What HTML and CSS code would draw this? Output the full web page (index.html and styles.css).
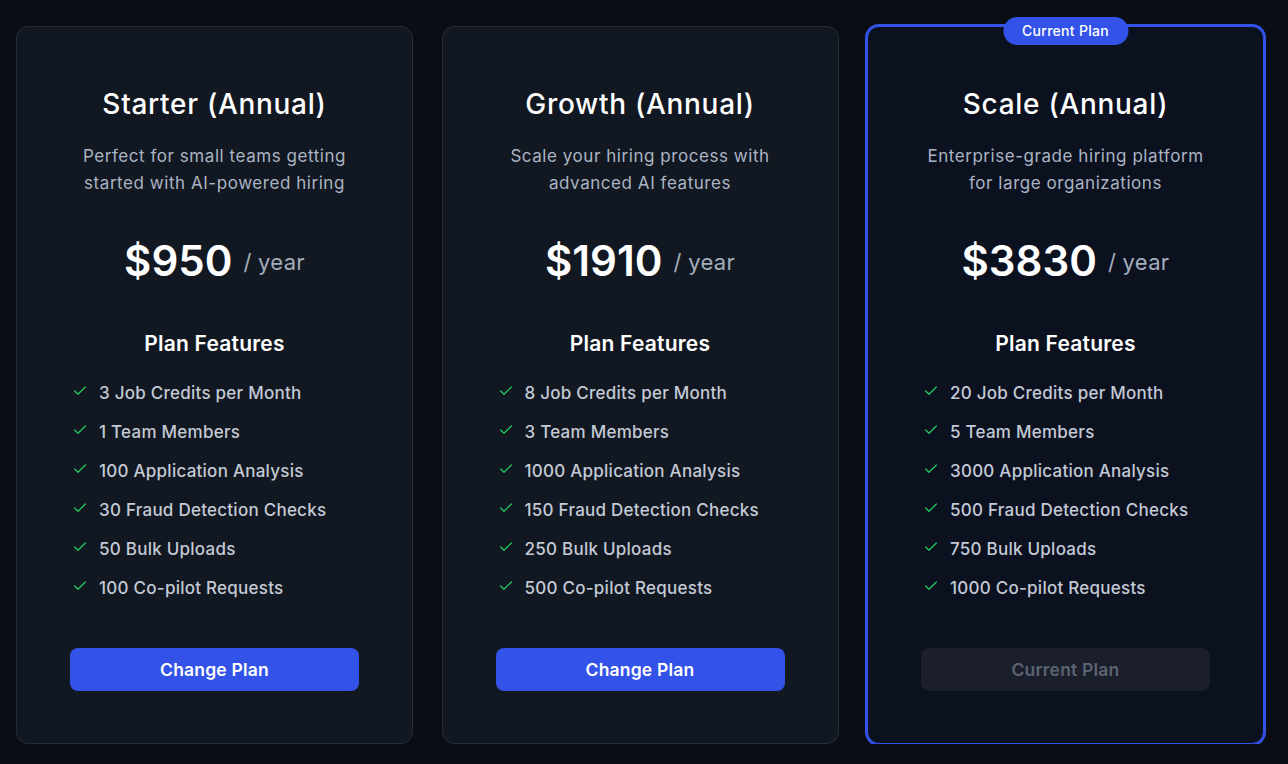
FILE: index.html
```html
<!DOCTYPE html>
<html lang="en">
<head>
<meta charset="utf-8">
<title>Plans</title>
<link rel="stylesheet" href="styles.css">
</head>
<body>
<main class="plans">
  <section class="card">
    <h2 class="title">Starter (Annual)</h2>
    <p class="desc">Perfect for small teams getting<br>started with AI-powered hiring</p>
    <div class="price"><span class="amount">$950</span><span class="period">/ year</span></div>
    <h3 class="features-title">Plan Features</h3>
    <ul class="features">
      <li><svg class="check" viewBox="0 0 24 24"><path d="M20 6 9 17l-5-5"/></svg>3 Job Credits per Month</li>
      <li><svg class="check" viewBox="0 0 24 24"><path d="M20 6 9 17l-5-5"/></svg>1 Team Members</li>
      <li><svg class="check" viewBox="0 0 24 24"><path d="M20 6 9 17l-5-5"/></svg>100 Application Analysis</li>
      <li><svg class="check" viewBox="0 0 24 24"><path d="M20 6 9 17l-5-5"/></svg>30 Fraud Detection Checks</li>
      <li><svg class="check" viewBox="0 0 24 24"><path d="M20 6 9 17l-5-5"/></svg>50 Bulk Uploads</li>
      <li><svg class="check" viewBox="0 0 24 24"><path d="M20 6 9 17l-5-5"/></svg>100 Co-pilot Requests</li>
    </ul>
    <button class="btn">Change Plan</button>
  </section>
  <section class="card">
    <h2 class="title">Growth (Annual)</h2>
    <p class="desc">Scale your hiring process with<br>advanced AI features</p>
    <div class="price"><span class="amount">$1910</span><span class="period">/ year</span></div>
    <h3 class="features-title">Plan Features</h3>
    <ul class="features">
      <li><svg class="check" viewBox="0 0 24 24"><path d="M20 6 9 17l-5-5"/></svg>8 Job Credits per Month</li>
      <li><svg class="check" viewBox="0 0 24 24"><path d="M20 6 9 17l-5-5"/></svg>3 Team Members</li>
      <li><svg class="check" viewBox="0 0 24 24"><path d="M20 6 9 17l-5-5"/></svg>1000 Application Analysis</li>
      <li><svg class="check" viewBox="0 0 24 24"><path d="M20 6 9 17l-5-5"/></svg>150 Fraud Detection Checks</li>
      <li><svg class="check" viewBox="0 0 24 24"><path d="M20 6 9 17l-5-5"/></svg>250 Bulk Uploads</li>
      <li><svg class="check" viewBox="0 0 24 24"><path d="M20 6 9 17l-5-5"/></svg>500 Co-pilot Requests</li>
    </ul>
    <button class="btn">Change Plan</button>
  </section>
  <section class="card current">
    <span class="badge">Current Plan</span>
    <h2 class="title">Scale (Annual)</h2>
    <p class="desc">Enterprise-grade hiring platform<br>for large organizations</p>
    <div class="price"><span class="amount">$3830</span><span class="period">/ year</span></div>
    <h3 class="features-title">Plan Features</h3>
    <ul class="features">
      <li><svg class="check" viewBox="0 0 24 24"><path d="M20 6 9 17l-5-5"/></svg>20 Job Credits per Month</li>
      <li><svg class="check" viewBox="0 0 24 24"><path d="M20 6 9 17l-5-5"/></svg>5 Team Members</li>
      <li><svg class="check" viewBox="0 0 24 24"><path d="M20 6 9 17l-5-5"/></svg>3000 Application Analysis</li>
      <li><svg class="check" viewBox="0 0 24 24"><path d="M20 6 9 17l-5-5"/></svg>500 Fraud Detection Checks</li>
      <li><svg class="check" viewBox="0 0 24 24"><path d="M20 6 9 17l-5-5"/></svg>750 Bulk Uploads</li>
      <li><svg class="check" viewBox="0 0 24 24"><path d="M20 6 9 17l-5-5"/></svg>1000 Co-pilot Requests</li>
    </ul>
    <button class="btn btn-disabled" disabled>Current Plan</button>
  </section>
</main>
</body>
</html>
```
FILE: styles.css
```css
* { box-sizing: border-box; }
html, body {
  margin: 0;
  padding: 0;
  background: #0a0d14;
  font-family: Inter, "Noto Sans", sans-serif;
  color: #f8fafc;
}
.plans {
  display: grid;
  grid-template-columns: repeat(3, 397px);
  column-gap: 28.5px;
  padding: 26px 0 0 16px;
}
.card {
  position: relative;
  height: 718px;
  background: #121821;
  border: 1px solid #262d39;
  border-radius: 12px;
  padding: 59px 53px 0;
  display: flex;
  flex-direction: column;
  align-items: stretch;
}
.card.current {
  background: #0c1120;
  border-color: #3353e8;
  box-shadow: 0 0 0 2px #3353e8;
}
.badge {
  position: absolute;
  top: -10px;
  left: 50%;
  transform: translateX(-50%);
  background: #3353e8;
  color: #fff;
  font-size: 14px;
  font-weight: 500;
  letter-spacing: 0.3px;
  line-height: 28px;
  height: 28px;
  padding: 0 19px;
  border-radius: 14px;
  white-space: nowrap;
}
.title {
  margin: 0;
  text-align: center;
  font-size: 28px;
  font-weight: 500;
  letter-spacing: 0.7px;
  line-height: 36px;
  color: #fff;
}
.desc {
  margin: 21px 0 0;
  text-align: center;
  font-size: 17px;
  letter-spacing: 0.55px;
  line-height: 27px;
  color: #aab4c3;
}
.price {
  margin-top: 40px;
  display: flex;
  justify-content: center;
  align-items: center;
  gap: 11px;
  height: 48px;
}
.amount {
  font-size: 42px;
  font-weight: 600;
  line-height: 48px;
  color: #fff;
}
.period {
  font-size: 22px;
  letter-spacing: 0.3px;
  color: #a3adbc;
  margin-top: 2px;
}
.features-title {
  margin: 45px 0 0;
  text-align: center;
  font-size: 21px;
  font-weight: 600;
  letter-spacing: 0.2px;
  line-height: 28px;
  color: #fff;
}
.features {
  list-style: none;
  margin: 23px 0 0;
  padding: 0 0 0 2px;
  display: flex;
  flex-direction: column;
  gap: 15px;
}
.features li {
  display: flex;
  align-items: center;
  gap: 11px;
  font-size: 17px;
  font-weight: 500;
  letter-spacing: 0.25px;
  line-height: 24px;
  color: #c3cad5;
}
.check {
  width: 16px;
  height: 16px;
  flex: none;
  margin-top: -5px;
  fill: none;
  stroke: #22c55e;
  stroke-width: 2;
  stroke-linecap: round;
  stroke-linejoin: round;
}
.btn {
  margin-top: 48px;
  height: 43px;
  border: none;
  border-radius: 8px;
  background: #3353e8;
  color: #fff;
  font-family: inherit;
  font-size: 17.5px;
  font-weight: 600;
  letter-spacing: 0.2px;
}
.btn-disabled {
  background: #1a1f2b;
  color: #5c6473;
}
```
